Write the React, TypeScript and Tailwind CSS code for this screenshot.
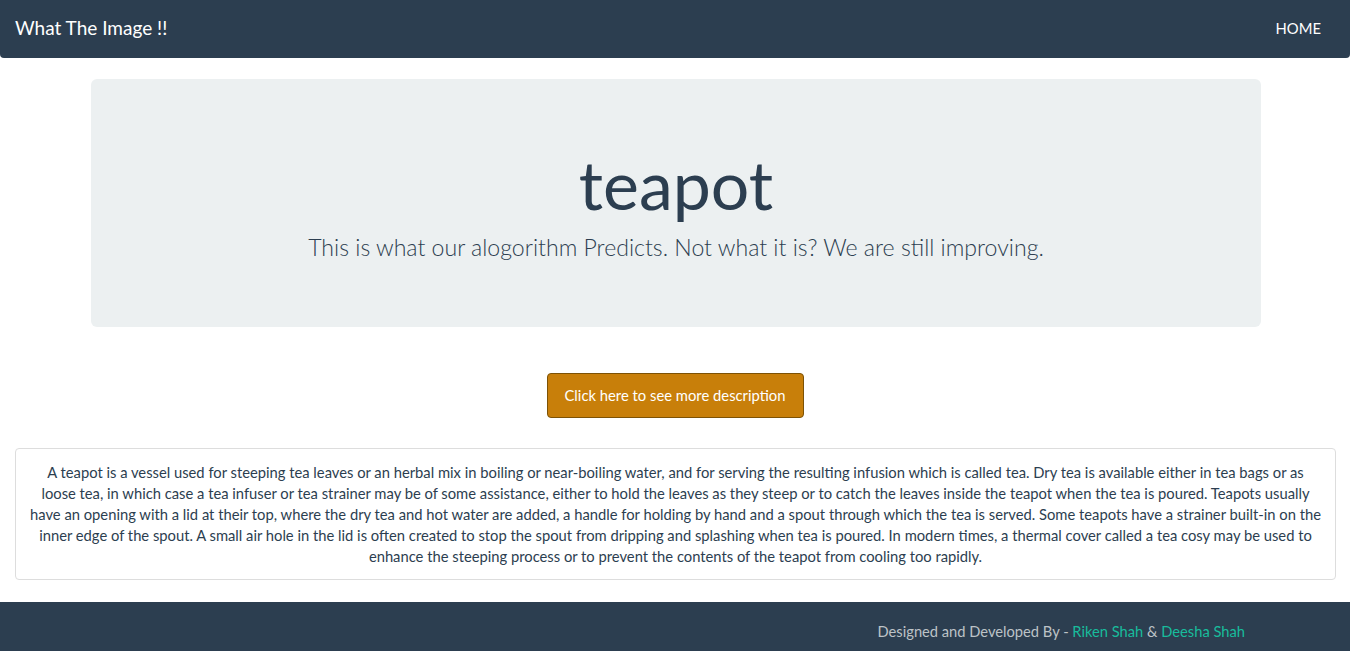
import React from "react";

const lines = [
  "A teapot is a vessel used for steeping tea leaves or an herbal mix in boiling or near-boiling water, and for serving the resulting infusion which is called tea. Dry tea is available either in tea bags or as",
  "loose tea, in which case a tea infuser or tea strainer may be of some assistance, either to hold the leaves as they steep or to catch the leaves inside the teapot when the tea is poured. Teapots usually",
  "have an opening with a lid at their top, where the dry tea and hot water are added, a handle for holding by hand and a spout through which the tea is served. Some teapots have a strainer built-in on the",
  "inner edge of the spout. A small air hole in the lid is often created to stop the spout from dripping and splashing when tea is poured. In modern times, a thermal cover called a tea cosy may be used to",
  "enhance the steeping process or to prevent the contents of the teapot from cooling too rapidly.",
];

const App = () => {
  return (
    <div
      className="min-h-[651px] bg-white text-[#2c3e50] flex flex-col"
      style={{ fontFamily: "Lato, 'Noto Sans', sans-serif" }}
    >
      {/* NAVBAR */}
      <nav className="h-[58px] bg-[#2c3e50] rounded-b-[4px] flex items-center justify-between px-[15px]">
        <a className="text-white text-[19px] leading-none mb-[3px]">What The Image !!</a>
        <a className="text-white text-[14.8px] uppercase pr-[14px] mb-[2px]">Home</a>
      </nav>

      {/* JUMBOTRON */}
      <div className="ml-[91px] mt-[21px] w-[1170px] h-[248px] pt-[6px] bg-[#ecf0f1] rounded-[6px] flex flex-col items-center justify-center">
        <h1 className="text-[68px] leading-[1.1] font-normal">teapot</h1>
        <p className="text-[23.1px] font-light mt-[8px]">
          This is what our alogorithm Predicts. Not what it is? We are still improving.
        </p>
      </div>

      {/* BUTTON */}
      <div className="flex justify-center mt-[46px]">
        <button className="h-[45px] w-[257px] bg-[#c87f0a] border border-[#7d5205] rounded-[4px] text-white text-[14.8px]">
          Click here to see more description
        </button>
      </div>

      {/* DESCRIPTION */}
      <div className="ml-[15px] mr-[14px] mt-[30px] border border-[#dddddd] rounded-[4px] px-[8px] pt-[13px] pb-[12px] text-center text-[14.75px] leading-[21px] text-[#2c3e50]">
        {lines.map((line, i) => (
          <span key={i} className="block whitespace-nowrap">
            {line}
          </span>
        ))}
      </div>

      {/* FOOTER */}
      <footer className="mt-[22px] h-[60px] bg-[#2c3e50] flex justify-end pr-[105px] pt-[18px] text-[14.7px] text-[#bdc3c7]">
        <p>
          Designed and Developed By -{" "}
          <a className="text-[#18bc9c]">Riken Shah</a> &amp;{" "}
          <a className="text-[#18bc9c]">Deesha Shah</a>
        </p>
      </footer>
    </div>
  );
};

export default App;
